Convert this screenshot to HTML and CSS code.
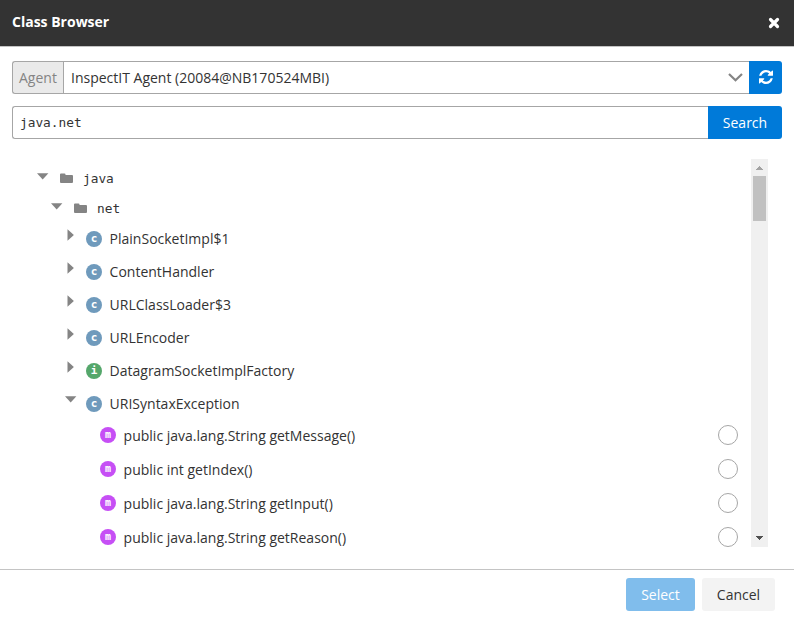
FILE: index.html
```html
<!DOCTYPE html>
<html lang="en">
<head>
<meta charset="utf-8">
<title>Class Browser</title>
<link rel="stylesheet" href="styles.css">
</head>
<body>
<svg class="defs" width="0" height="0" aria-hidden="true">
  <symbol id="folder" viewBox="0 0 13 11"><path d="M0 1.500Q0 .5 1 .5H4.500Q5.500 .5 5.500 1.500V2H12Q13 2 13 3V9Q13 10 12 10H1Q0 10 0 9Z" fill="#848484"/></symbol>
  <symbol id="down" viewBox="0 0 12 7"><path d="M0 .3H11.400L5.700 6.500Z" fill="#848484"/></symbol>
  <symbol id="right" viewBox="0 0 7 12"><path d="M.5 .3V11.700L6.900 6Z" fill="#848484"/></symbol>
</svg>
<div class="dialog">
  <header class="header">
    <h1 class="title">Class Browser</h1>
    <svg class="close" viewBox="0 0 12 12"><path d="M2.500 2.500L9.500 9.500M9.500 2.500L2.500 9.500" stroke="#fff" stroke-width="3.200" stroke-linecap="round"/></svg>
  </header>
  <main class="content">
    <div class="group agent">
      <span class="addon">Agent</span>
      <div class="field select">
        <span>InspectIT Agent (20084@NB170524MBI)</span>
        <svg class="chevron" width="15" height="9" viewBox="0 0 15 9"><path d="M1 1L7.500 7.300L14 1" fill="none" stroke="#848484" stroke-width="2.200"/></svg>
      </div>
      <button class="btn refresh" aria-label="Refresh"><svg width="14" height="14" viewBox="0 0 1536 1536"><path fill="#fff" d="M1511 928q0 5-1 7-64 268-268 434.500T764 1536q-146 0-282.500-55T238 1324l-129 129q-19 19-45 19t-45-19-19-45V960q0-26 19-45t45-19h448q26 0 45 19t19 45-19 45l-137 137q71 66 161 102t187 36q134 0 250-65t186-179q11-17 53-117 8-23 30-23h192q13 0 22.500 9.500t9.500 22.500zM1536 128v448q0 26-19 45t-45 19h-448q-26 0-45-19t-19-45 19-45l138-138Q969 256 768 256q-134 0-250 65T332 500q-11 17-53 117-8 23-30 23H50q-13 0-22.500-9.500T18 608v-7q65-268 270-434.500T768 0q146 0 284 55.500T1297 212l130-129q19-19 45-19t45 19 19 45z"/></svg></button>
    </div>
    <div class="group">
      <div class="field query">java.net</div>
      <button class="btn search">Search</button>
    </div>
    <div class="browser">
      <div class="tree">
        <div class="row package"><svg class="toggle"><use href="#down"/></svg><svg class="folder"><use href="#folder"/></svg><span>java</span></div>
        <div class="row package nested"><svg class="toggle"><use href="#down"/></svg><svg class="folder"><use href="#folder"/></svg><span>net</span></div>
        <div class="row type"><svg class="toggle closed"><use href="#right"/></svg><i class="badge">c</i><span>PlainSocketImpl$1</span></div>
        <div class="row type"><svg class="toggle closed"><use href="#right"/></svg><i class="badge">c</i><span>ContentHandler</span></div>
        <div class="row type"><svg class="toggle closed"><use href="#right"/></svg><i class="badge">c</i><span>URLClassLoader$3</span></div>
        <div class="row type"><svg class="toggle closed"><use href="#right"/></svg><i class="badge">c</i><span>URLEncoder</span></div>
        <div class="row type"><svg class="toggle closed"><use href="#right"/></svg><i class="badge interface">i</i><span>DatagramSocketImplFactory</span></div>
        <div class="row type"><svg class="toggle"><use href="#down"/></svg><i class="badge">c</i><span>URISyntaxException</span></div>
        <div class="row member"><i class="badge method">m</i><span>public java.lang.String getMessage()</span><b class="radio"></b></div>
        <div class="row member"><i class="badge method">m</i><span>public int getIndex()</span><b class="radio"></b></div>
        <div class="row member"><i class="badge method">m</i><span>public java.lang.String getInput()</span><b class="radio"></b></div>
        <div class="row member"><i class="badge method">m</i><span>public java.lang.String getReason()</span><b class="radio"></b></div>
      </div>
      <div class="scrollbar">
        <svg width="17" height="17" viewBox="0 0 17 17" shape-rendering="crispEdges"><path d="M8 7h1v1h1v1h1v1h1v1H5v-1h1V9h1V8h1z" fill="#a3a3a3"/></svg>
        <div class="thumb"></div>
        <svg class="end" width="17" height="17" viewBox="0 0 17 17" shape-rendering="crispEdges"><path d="M5 6h7v1h-1v1h-1v1H9v1H8V9H7V8H6V7H5z" fill="#505050"/></svg>
      </div>
    </div>
  </main>
  <footer class="footer">
    <button class="btn confirm">Select</button>
    <button class="btn cancel">Cancel</button>
  </footer>
</div>
</body>
</html>
```
FILE: styles.css
```css
* { box-sizing: border-box; }
body { margin: 0; background: #fff; color: #333; font: 14px/20px "Open Sans", sans-serif; }
.defs { display: block; }
.dialog { height: 618px; display: flex; flex-direction: column; overflow: hidden; }
.header { height: 47px; flex: none; display: flex; align-items: center; justify-content: space-between; padding: 0 14px 2px 12px; background: #333; border-bottom: 1px solid #c4c4c4; }
.title { margin: 0; font-size: 14px; line-height: 20px; font-weight: 700; color: #fff; }
.close { width: 12px; height: 12px; margin-top: 2px; }
.content { flex: 1; padding: 14px 12px 0; }
.group { display: flex; height: 33px; margin-bottom: 12px; }
.addon { width: 51px; padding: 6px 0 0 6px; background: #eaeaea; border: 1px solid #a6a6a6; border-right: 0; border-radius: 3px 0 0 3px; color: #848484; line-height: 20px; }
.field { flex: 1; border: 1px solid #a6a6a6; border-right: 0; padding: 0 7px; display: flex; align-items: center; justify-content: space-between; }
.chevron { margin: 0 -1px 0 0; }
.query { border-radius: 3px 0 0 3px; font: 12.8px/20px "DejaVu Sans Mono", monospace; }
.btn { border: 0; padding: 0; font: 14px/20px "Open Sans", sans-serif; color: #fff; background: #007ad9; display: flex; align-items: center; justify-content: center; }
.refresh { width: 33px; border-radius: 0 3px 3px 0; }
.refresh svg { margin-bottom: 1px; }
.search { width: 74px; border-radius: 0 3px 3px 0; }
.browser { display: flex; height: 388px; margin: 20px 14px 0 0; }
.tree { flex: 1; padding: 5px 13px 0 25px; overflow: hidden; }
.row { display: flex; align-items: center; white-space: nowrap; }
.package { height: 30px; font: 12.8px/20px "DejaVu Sans Mono", monospace; }
.nested { padding-left: 14px; margin-bottom: -2px; }
.toggle { width: 12px; height: 7px; margin-bottom: 5px; }
.type .toggle { margin-bottom: 9px; }
.type .closed { width: 7px; height: 12px; margin: 0 3px 8px 2px; }
.folder { width: 13px; height: 11px; margin: 0 10px 1px 11px; }
.type { height: 33px; padding-left: 28px; }
.badge { width: 16px; height: 16px; flex: none; border-radius: 50%; margin: 1px 7.600px 0 9px; background: #6f9abc; color: #fff; text-align: center; font: bold 11px/15px "DejaVu Sans Mono", monospace; }
.interface { background: #55a76b; }
.member { height: 34px; padding-left: 54px; }
.type + .member { margin-top: -1px; }
.method { margin: 0 7.600px 2px 9px; background: #c64ff5; font-size: 10px; line-height: 16px; }
.radio { width: 20px; height: 20px; border: 1px solid #a6a6a6; border-radius: 50%; margin: 0 0 2px auto; }
.scrollbar { width: 17px; background: #f0f0f0; display: flex; flex-direction: column; }
.scrollbar svg { display: block; }
.thumb { height: 45px; margin: 0 2px; background: #c1c1c1; }
.end { margin-top: auto; }
.footer { height: 49px; flex: none; border-top: 1px solid #c4c4c4; display: flex; gap: 7px; justify-content: flex-end; padding: 8px 19px 0 0; }
.footer .btn { height: 33px; border-radius: 3px; }
.confirm { width: 69px; background: #80bdec; }
.footer .cancel { width: 73px; background: #f3f3f3; color: #333; }
```
